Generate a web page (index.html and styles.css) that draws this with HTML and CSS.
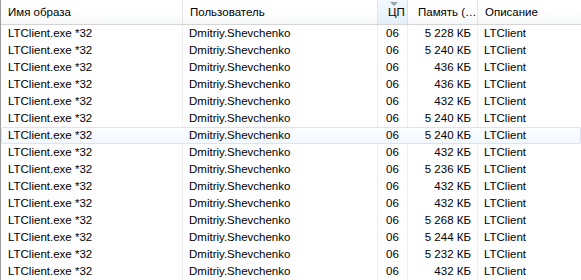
FILE: index.html
```html
<!DOCTYPE html>
<html>
<head>
<meta charset="utf-8">
<link rel="stylesheet" href="styles.css">
</head>
<body>
<div class="list">
  <div class="head">
    <div class="hc c1">Имя образа</div>
    <div class="hc c2">Пользователь</div>
    <div class="hc c3 sorted"><span class="arrow"></span>ЦП</div>
    <div class="hc c4">Память (…</div>
    <div class="hc c5">Описание</div>
  </div>
  <div class="rows">
    <div class="row"><div class="c1">LTClient.exe *32</div><div class="c2">Dmitriy.Shevchenko</div><div class="c3">06</div><div class="c4">5 228 КБ</div><div class="c5">LTClient</div></div>
    <div class="row"><div class="c1">LTClient.exe *32</div><div class="c2">Dmitriy.Shevchenko</div><div class="c3">06</div><div class="c4">5 240 КБ</div><div class="c5">LTClient</div></div>
    <div class="row"><div class="c1">LTClient.exe *32</div><div class="c2">Dmitriy.Shevchenko</div><div class="c3">06</div><div class="c4">436 КБ</div><div class="c5">LTClient</div></div>
    <div class="row"><div class="c1">LTClient.exe *32</div><div class="c2">Dmitriy.Shevchenko</div><div class="c3">06</div><div class="c4">436 КБ</div><div class="c5">LTClient</div></div>
    <div class="row"><div class="c1">LTClient.exe *32</div><div class="c2">Dmitriy.Shevchenko</div><div class="c3">06</div><div class="c4">432 КБ</div><div class="c5">LTClient</div></div>
    <div class="row"><div class="c1">LTClient.exe *32</div><div class="c2">Dmitriy.Shevchenko</div><div class="c3">06</div><div class="c4">5 240 КБ</div><div class="c5">LTClient</div></div>
    <div class="row hover"><div class="c1">LTClient.exe *32</div><div class="c2">Dmitriy.Shevchenko</div><div class="c3">06</div><div class="c4">5 240 КБ</div><div class="c5">LTClient</div></div>
    <div class="row"><div class="c1">LTClient.exe *32</div><div class="c2">Dmitriy.Shevchenko</div><div class="c3">06</div><div class="c4">432 КБ</div><div class="c5">LTClient</div></div>
    <div class="row"><div class="c1">LTClient.exe *32</div><div class="c2">Dmitriy.Shevchenko</div><div class="c3">06</div><div class="c4">5 236 КБ</div><div class="c5">LTClient</div></div>
    <div class="row"><div class="c1">LTClient.exe *32</div><div class="c2">Dmitriy.Shevchenko</div><div class="c3">06</div><div class="c4">432 КБ</div><div class="c5">LTClient</div></div>
    <div class="row"><div class="c1">LTClient.exe *32</div><div class="c2">Dmitriy.Shevchenko</div><div class="c3">06</div><div class="c4">432 КБ</div><div class="c5">LTClient</div></div>
    <div class="row"><div class="c1">LTClient.exe *32</div><div class="c2">Dmitriy.Shevchenko</div><div class="c3">06</div><div class="c4">5 268 КБ</div><div class="c5">LTClient</div></div>
    <div class="row"><div class="c1">LTClient.exe *32</div><div class="c2">Dmitriy.Shevchenko</div><div class="c3">06</div><div class="c4">5 244 КБ</div><div class="c5">LTClient</div></div>
    <div class="row"><div class="c1">LTClient.exe *32</div><div class="c2">Dmitriy.Shevchenko</div><div class="c3">06</div><div class="c4">5 232 КБ</div><div class="c5">LTClient</div></div>
    <div class="row"><div class="c1">LTClient.exe *32</div><div class="c2">Dmitriy.Shevchenko</div><div class="c3">06</div><div class="c4">432 КБ</div><div class="c5">LTClient</div></div>
  </div>
</div>
</body>
</html>
```
FILE: styles.css
```css
html, body {
  margin: 0;
  padding: 0;
  background: #fff;
  overflow: hidden;
}
body {
  font-family: "Liberation Sans", Arial, sans-serif;
  font-size: 11.5px;
  color: #000;
}
.list {
  width: 581px;
  height: 280px;
  border-left: 1px solid #9c9c9c;
  box-sizing: border-box;
  overflow: hidden;
}
.head, .row {
  display: grid;
  grid-template-columns: 182px 195px 30px 70px 1fr;
}
.head {
  height: 24px;
  border-bottom: 1px solid #d5d5d5;
  background: linear-gradient(#ffffff 0%, #ffffff 50%, #f6f7f9 100%);
}
.hc {
  position: relative;
  line-height: 25px;
  padding-left: 7px;
  border-right: 1px solid #e3e4e6;
  white-space: nowrap;
  overflow: hidden;
}
.hc.c4 { padding-left: 10px; }
.hc.c5 { border-right: none; padding-left: 7px; }
.hc.sorted {
  background: linear-gradient(#f2f8fd 0%, #e3eff9 100%);
  border-right-color: #d6e3ee;
  padding-left: 10px;
}
.arrow {
  position: absolute;
  left: 12px;
  top: 2px;
  width: 0;
  height: 0;
  border-left: 4px solid transparent;
  border-right: 4px solid transparent;
  border-top: 4px solid #9aa3ad;
}
.rows {
  display: flex;
  flex-direction: column;
}
.row {
  height: 17px;
  line-height: 17px;
}
.row > div {
  white-space: nowrap;
  overflow: hidden;
  border-right: 1px solid #eeeeee;
}
.row .c1 { padding-left: 7px; }
.row .c2 { padding-left: 6px; }
.row .c3 { padding-left: 8px; }
.row .c4 { text-align: right; padding-right: 6px; }
.row .c5 { padding-left: 6px; border-right: none; }
.row.hover {
  box-shadow: inset 0 0 0 1px #d5e6f7;
  border-radius: 2px;
  background: linear-gradient(#fbfdff, #f2f8fe);
}
.row.hover > div { border-right-color: transparent; }
```
